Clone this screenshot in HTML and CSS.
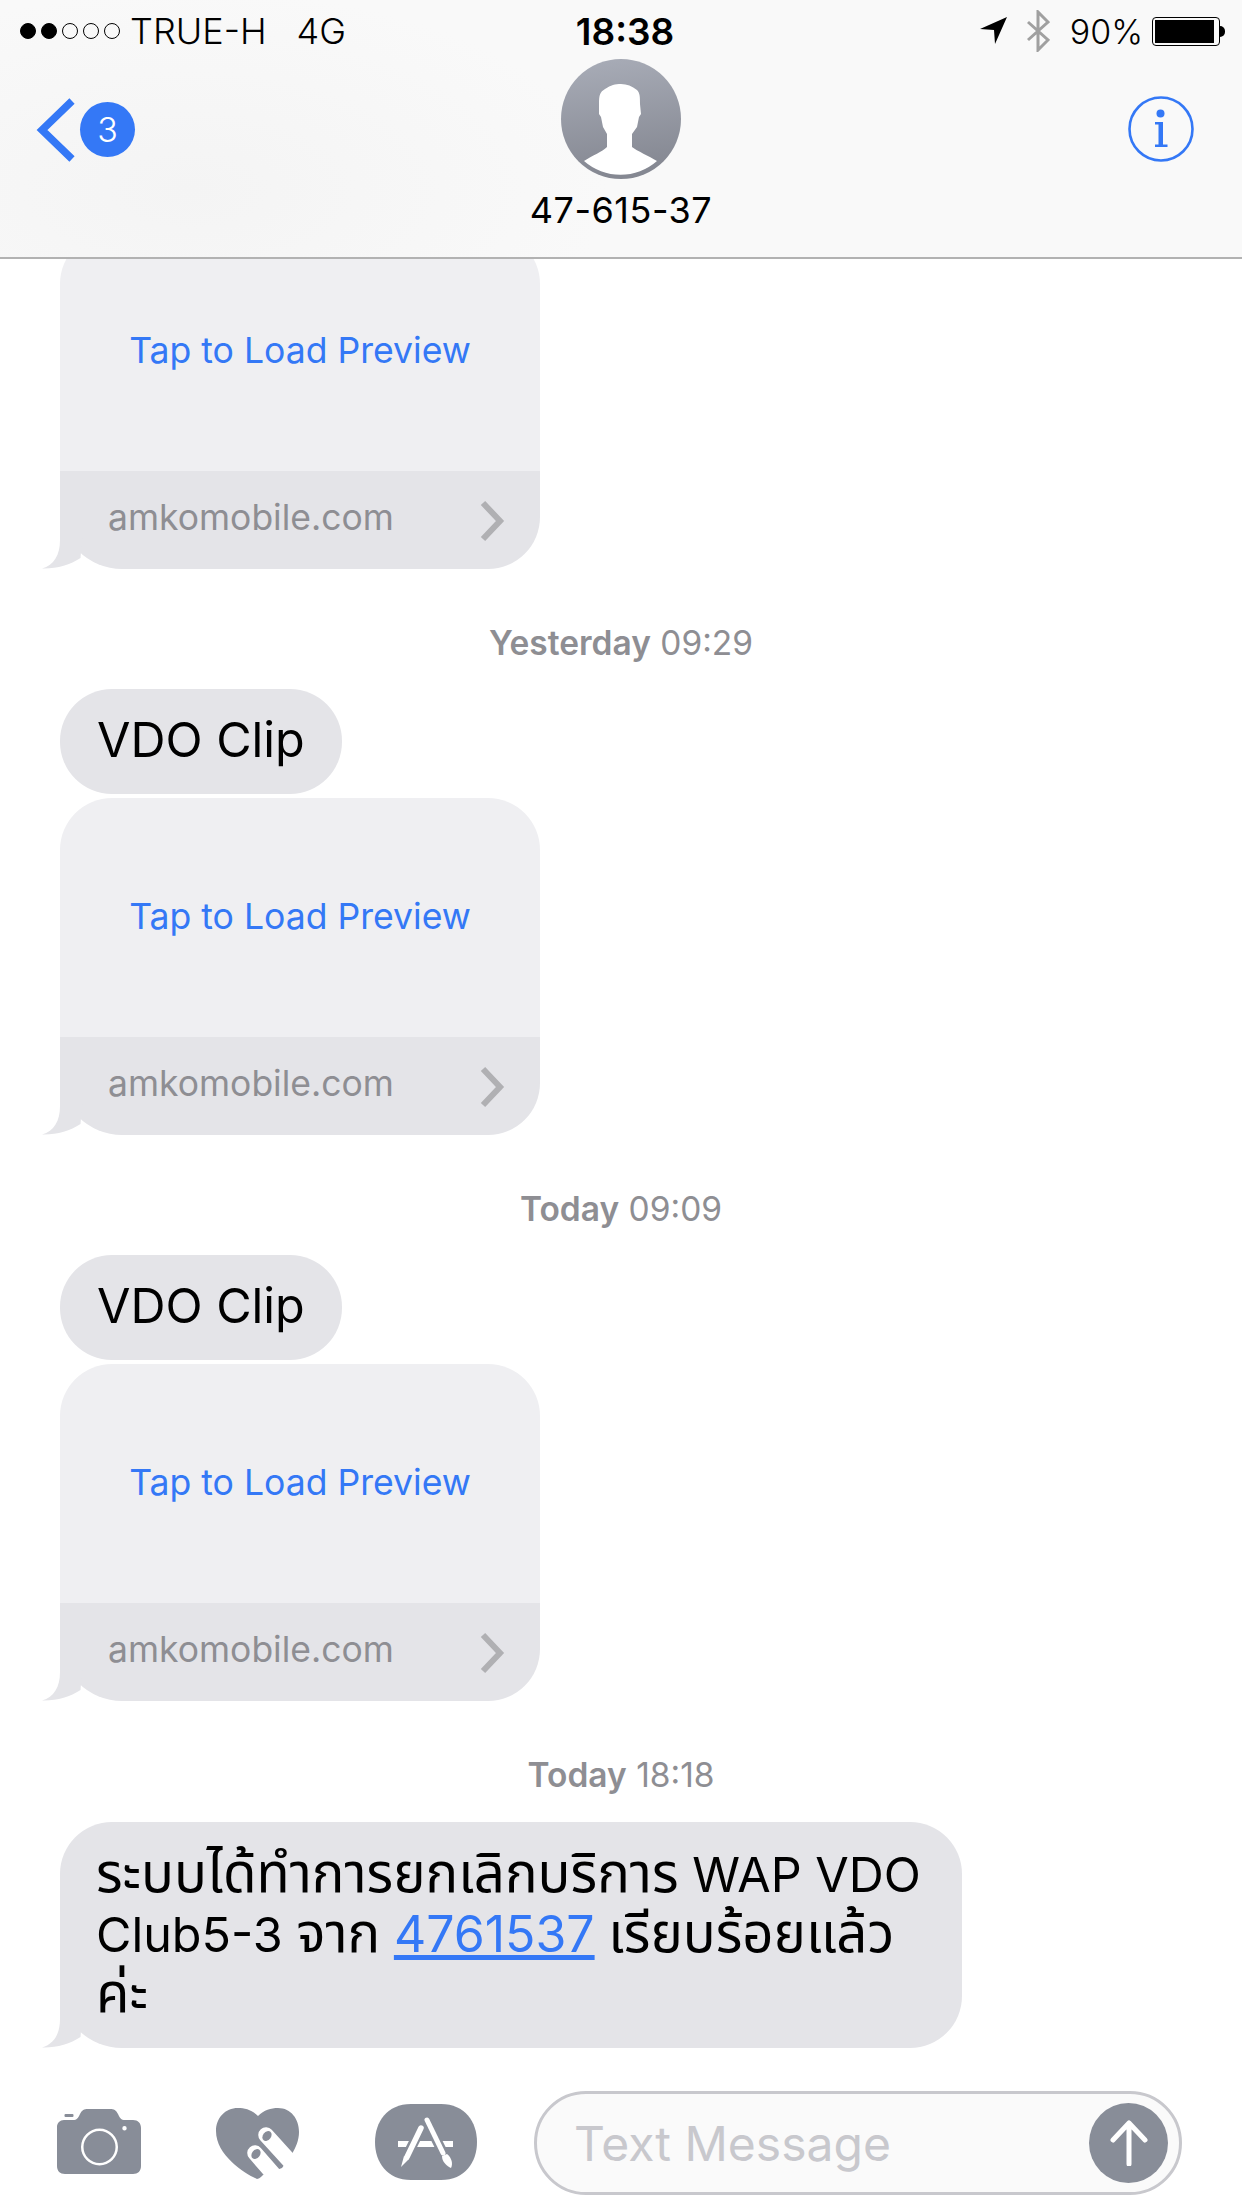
FILE: index.html
```html
<!DOCTYPE html>
<html lang="en">
<head>
<meta charset="utf-8">
<title>Messages</title>
<link rel="stylesheet" href="styles.css">
</head>
<body>
<div class="screen">
  <header class="nav">
    <div class="status">
      <div class="status-left">
        <span class="dots"><i class="dot on"></i><i class="dot on"></i><i class="dot"></i><i class="dot"></i><i class="dot"></i></span>
        <span class="carrier">TRUE-H</span>
        <span class="net">4G</span>
      </div>
      <div class="clock">18:38</div>
      <div class="status-right">
        <svg class="loc" width="28" height="28" viewBox="0 0 28 28"><path d="M0 12 L27 0 L15 27 L14 13 Z" fill="#000"/></svg>
        <svg class="bt" width="24" height="42" viewBox="0 0 24 42"><path d="M2 12 L22 30 L12 40 V2 L22 12 L2 30" fill="none" stroke="#a0a0a0" stroke-width="3"/></svg>
        <span class="pct">90%</span>
        <span class="battery"><span class="battery-body"><span class="battery-fill"></span></span><span class="battery-tip"></span></span>
      </div>
    </div>
    <div class="nav-main">
      <div class="back">
        <svg width="40" height="64" viewBox="0 0 40 64"><path d="M36 3 L6 32 L36 61" fill="none" stroke="#3478f6" stroke-width="7.500"/></svg>
        <span class="badge">3</span>
      </div>
      <div class="contact">
        <svg class="avatar" width="120" height="120" viewBox="0 0 120 120">
          <defs>
            <linearGradient id="av" x1="0" y1="0" x2="0.15" y2="1"><stop offset="0" stop-color="#a9adb8"/><stop offset="1" stop-color="#858892"/></linearGradient>
          </defs>
          <circle cx="60" cy="60" r="60" fill="url(#av)"/>
          <path fill="#fff" d="M38 45 C38 36 39 33 44 30 C50 26 54 25 60 25 C66 25 71 27 76 31 C79 34 79 38 79 45 L80 55 L78 58 L76 68 L71 75 L71 88 C76 92 88 97 96 102 A55.300 55.300 0 0 1 23 102 C32 96 41 93 46 88 L46 75 L42 68 L40 58 L38 55 Z"/>
        </svg>
        <div class="contact-name">47-615-37</div>
      </div>
      <svg class="info" width="66" height="66" viewBox="0 0 66 66">
        <circle cx="33" cy="33" r="31.500" fill="none" stroke="#3478f6" stroke-width="2.600"/>
        <circle cx="32.500" cy="17.500" r="4" fill="#3478f6"/>
        <path d="M27 26 H35 V48.500 H39.500 V51 H27 V48.500 H30.500 V28.500 H27 Z" fill="#3478f6"/>
      </svg>
    </div>
  </header>

  <main class="thread">
    <article class="card">
      <div class="card-top"><a class="tap">Tap to Load Preview</a></div>
      <div class="card-foot"><span class="site">amkomobile.com</span><svg class="chev" width="26" height="42" viewBox="0 0 26 42"><path d="M4 3 L21 21 L4 39" fill="none" stroke="#b0b0b3" stroke-width="6"/></svg></div>
      <svg class="tail" width="42" height="62" viewBox="0 0 42 62"><path d="M18 0 V33 C18 48 12 58 0 61.500 C14 62 28 58 38.500 51 L41 20 L18 0 Z" fill="#e4e4e8"/></svg>
    </article>

    <div class="stamp"><b>Yesterday</b> 09:29</div>
    <div class="bubble">VDO Clip</div>
    <article class="card">
      <div class="card-top"><a class="tap">Tap to Load Preview</a></div>
      <div class="card-foot"><span class="site">amkomobile.com</span><svg class="chev" width="26" height="42" viewBox="0 0 26 42"><path d="M4 3 L21 21 L4 39" fill="none" stroke="#b0b0b3" stroke-width="6"/></svg></div>
      <svg class="tail" width="42" height="62" viewBox="0 0 42 62"><path d="M18 0 V33 C18 48 12 58 0 61.500 C14 62 28 58 38.500 51 L41 20 L18 0 Z" fill="#e4e4e8"/></svg>
    </article>

    <div class="stamp"><b>Today</b> 09:09</div>
    <div class="bubble">VDO Clip</div>
    <article class="card">
      <div class="card-top"><a class="tap">Tap to Load Preview</a></div>
      <div class="card-foot"><span class="site">amkomobile.com</span><svg class="chev" width="26" height="42" viewBox="0 0 26 42"><path d="M4 3 L21 21 L4 39" fill="none" stroke="#b0b0b3" stroke-width="6"/></svg></div>
      <svg class="tail" width="42" height="62" viewBox="0 0 42 62"><path d="M18 0 V33 C18 48 12 58 0 61.500 C14 62 28 58 38.500 51 L41 20 L18 0 Z" fill="#e4e4e8"/></svg>
    </article>

    <div class="stamp"><b>Today</b> 18:18</div>
    <div class="bubble long">
      <div class="line"><span class="th">ระบบได้ทำการยกเลิกบริการ</span> WAP VDO</div>
      <div class="line">Club5-3 <span class="th">จาก</span> <a class="num">4761537</a> <span class="th">เรียบร้อยแล้ว</span></div>
      <div class="line"><span class="th">ค่ะ</span></div>
      <svg class="tail" width="42" height="62" viewBox="0 0 42 62"><path d="M18 0 V33 C18 48 12 58 0 61.500 C14 62 28 58 38.500 51 L41 20 L18 0 Z" fill="#e4e4e8"/></svg>
    </div>
  </main>

  <footer class="composer">
    <svg class="cam" width="84" height="66" viewBox="0 0 84 66">
      <path fill-rule="evenodd" fill="#888d98" d="M7 12 H16 C20 12 21 10 23 6 C25 2 27 1 31 1 H53 C57 1 59 2 61 6 C63 10 64 12 68 12 H76 C81 12 84 15 84 20 V58 C84 63 81 66 76 66 H8 C3 66 0 63 0 58 V19 C0 15 3 12 7 12 Z M42.500 20.500 A18.500 18.500 0 1 0 42.500 57.500 A18.500 18.500 0 1 0 42.500 20.500 Z M42.500 23 A16 16 0 1 1 42.500 55 A16 16 0 1 1 42.500 23 Z M67.500 18 A2.200 2.200 0 1 0 67.500 22.400 A2.200 2.200 0 1 0 67.500 18 Z"/>
      <rect x="7.500" y="6" width="9" height="3" rx="1" fill="#888d98"/>
    </svg>
    <svg class="heart" width="84" height="72" viewBox="0 0 84 72">
      <path fill="#888d98" d="M42 8 C48 2 55 0 62 0 C75 0 83 11 83 24 C83 32 80 39 76 46 L66 60 L47 67 C44 70 42 71 41 71 C30 66 0 48 0 23 C0 10 9 0 22 0 C29 0 36 2 42 8 Z"/>
      <path fill="none" stroke="#fff" stroke-width="15.500" stroke-linecap="round" d="M50 27 L90 71 M39 45 L66 76"/>
      <ellipse cx="51" cy="28" rx="4" ry="5.500" transform="rotate(38 51 28)" fill="#888d98"/>
      <ellipse cx="40" cy="46" rx="4" ry="5.500" transform="rotate(38 40 46)" fill="#888d98"/>
    </svg>
    <svg class="store" width="102" height="76" viewBox="0 0 102 76">
      <path fill="#888d98" d="M36 0 H66 C90 0 102 18 102 38 C102 58 90 76 66 76 H36 C12 76 0 58 0 38 C0 18 12 0 36 0 Z"/>
      <path fill="#fff" d="M23 37 H78 V43 H23 Z"/>
      <path fill="none" stroke="#888d98" stroke-width="10" d="M47 22 L30 56 M51 15 L71 55"/>
      <path fill="none" stroke="#fff" stroke-width="5.500" stroke-linecap="round" d="M46 24 L32 53"/>
      <path fill="#fff" d="M29 52 L34 55 L26 63 Z"/>
      <path fill="none" stroke="#fff" stroke-width="5" stroke-linecap="round" d="M52 16 L68 49"/>
      <path fill="#fff" d="M67 52 L72 50 C77 54 78 60 76 64 C72 62 67 58 67 52 Z"/>
    </svg>
    <div class="field">
      <span class="placeholder">Text Message</span>
      <span class="send">
        <svg width="40" height="46" viewBox="0 0 40 46"><path d="M20 44 V3 M4 20 L20 3 L36 20" fill="none" stroke="#fff" stroke-width="5" stroke-linecap="round" stroke-linejoin="round"/></svg>
      </span>
    </div>
  </footer>
</div>
</body>
</html>
```

FILE: styles.css
```css
* { box-sizing: border-box; }
html, body { margin: 0; padding: 0; background: #fff; }
.screen {
  width: 1242px; height: 2208px; overflow: hidden; display: flex; flex-direction: column;
  font-family: Inter, "Noto Sans", "Noto Sans Thai", Roboto, sans-serif; color: #000;
}
.nav {
  height: 259px; flex: none; border-bottom: 2px solid #b2b2b2;
  background: radial-gradient(ellipse 420px 200px at 190px 190px, #f4f4f4, #f9f9f9);
  position: relative; z-index: 2;
}
.status { height: 62px; display: grid; grid-template-columns: 1fr auto 1fr; align-items: center; padding: 0 17px 0 20px; }
.status-left { display: flex; align-items: center; font-size: 36px; line-height: 1; font-weight: 300; }
.dots { display: flex; gap: 5px; margin-right: 10px; }
.dot { width: 16px; height: 16px; border-radius: 50%; border: 1.5px solid #000; display: block; }
.dot.on { background: #000; }
.net { margin-left: 30px; }
.clock { font-size: 37px; font-weight: 600; margin-left: 5px; }
.status-right { display: flex; align-items: center; justify-content: flex-end; font-size: 34px; font-weight: 300; }
.loc { margin-right: 18px; }
.bt { margin-right: 20px; }
.pct { margin-right: 9px; }
.battery { display: flex; align-items: center; }
.battery-body { width: 68px; height: 29px; border: 1.5px solid #000; border-radius: 4px; padding: 2px; display: block; }
.battery-fill { display: block; width: 59px; height: 100%; background: #000; }
.battery-tip { width: 5px; height: 11px; background: #000; border-radius: 0 5px 5px 0; }
.nav-main { margin-top: -4px; display: grid; grid-template-columns: 1fr 240px 1fr; padding: 0 37px; }
.back { display: flex; align-items: flex-start; margin-top: 37px; margin-left: -1px; }
.back svg { display: block; margin-top: 3px; }
.badge {
  width: 55px; height: 55px; border-radius: 50%; background: #3478f6; color: #fff; font-size: 34px;
  display: flex; align-items: center; justify-content: center; margin: 7px 0 0 4px; font-weight: 300;
}
.contact { display: flex; flex-direction: column; align-items: center; margin-top: 1px; }
.avatar { display: block; }
.contact-name { font-size: 36px; margin-top: 11px; line-height: 40px; letter-spacing: .5px; font-weight: 400; }
.info { display: block; margin: 38px 11px 0 0; justify-self: end; }

.thread { flex: 1; min-height: 0; margin-top: -27px; padding-left: 60px; display: flex; flex-direction: column; align-items: flex-start; }
.card { position: relative; width: 480px; flex: none; }
.card-top {
  height: 239px; background: #efeff2; border-radius: 52px 52px 0 0;
  display: flex; align-items: center; justify-content: center;
}
.tap { color: #3478f6; font-size: 35.6px; margin-top: -2px; }
.card-foot {
  height: 98px; background: #e4e4e8; border-radius: 0 0 52px 62px; padding: 0 35px 0 48px;
  display: flex; align-items: center; justify-content: space-between; color: #8e8e93; font-size: 35.5px;
}
.site { margin-top: -5px; }
.chev { display: block; margin-top: 2px; }
.tail { position: absolute; left: -18px; bottom: 0; display: block; }
.stamp { align-self: stretch; width: 1122px; text-align: center; color: #8e8e93; font-size: 33.5px; line-height: 40px; margin: 54px 0 26px; }
.stamp b { font-weight: 600; }
.bubble {
  position: relative; flex: none; background: #e4e4e8; border-radius: 52px; font-size: 48.5px; line-height: 60px;
  padding: 21px 37px 24px; margin-bottom: 4px; white-space: nowrap;
}
.bubble.long { width: 902px; height: 226px; padding: 20px 36px 0; border-bottom-left-radius: 62px; margin-top: 1px; margin-bottom: 0; }
.line { height: 60px; }
.th { font-size: 54.5px; line-height: 60px; }
.num { color: #3478f6; text-decoration: underline; font-size: 50px; }

.composer { height: 139px; flex: none; display: flex; align-items: flex-start; padding: 0 0 0 57px; position: relative; background: #fff; }
.cam { margin-top: 39px; flex: none; }
.heart { margin: 39px 0 0 75px; flex: none; }
.store { margin: 35px 0 0 75px; flex: none; }
.field {
  margin: 22px 0 0 57px; width: 648px; height: 104px; border: 3px solid #c8c8cd; border-radius: 52px; background: #fafafa;
  display: flex; align-items: center; justify-content: space-between; padding: 0 11px 0 37px;
}
.placeholder { color: #c8c8cd; font-size: 48px; }
.send { width: 79px; height: 80px; border-radius: 50%; background: #888d98; display: flex; align-items: center; justify-content: center; }
.send svg { display: block; }
```
